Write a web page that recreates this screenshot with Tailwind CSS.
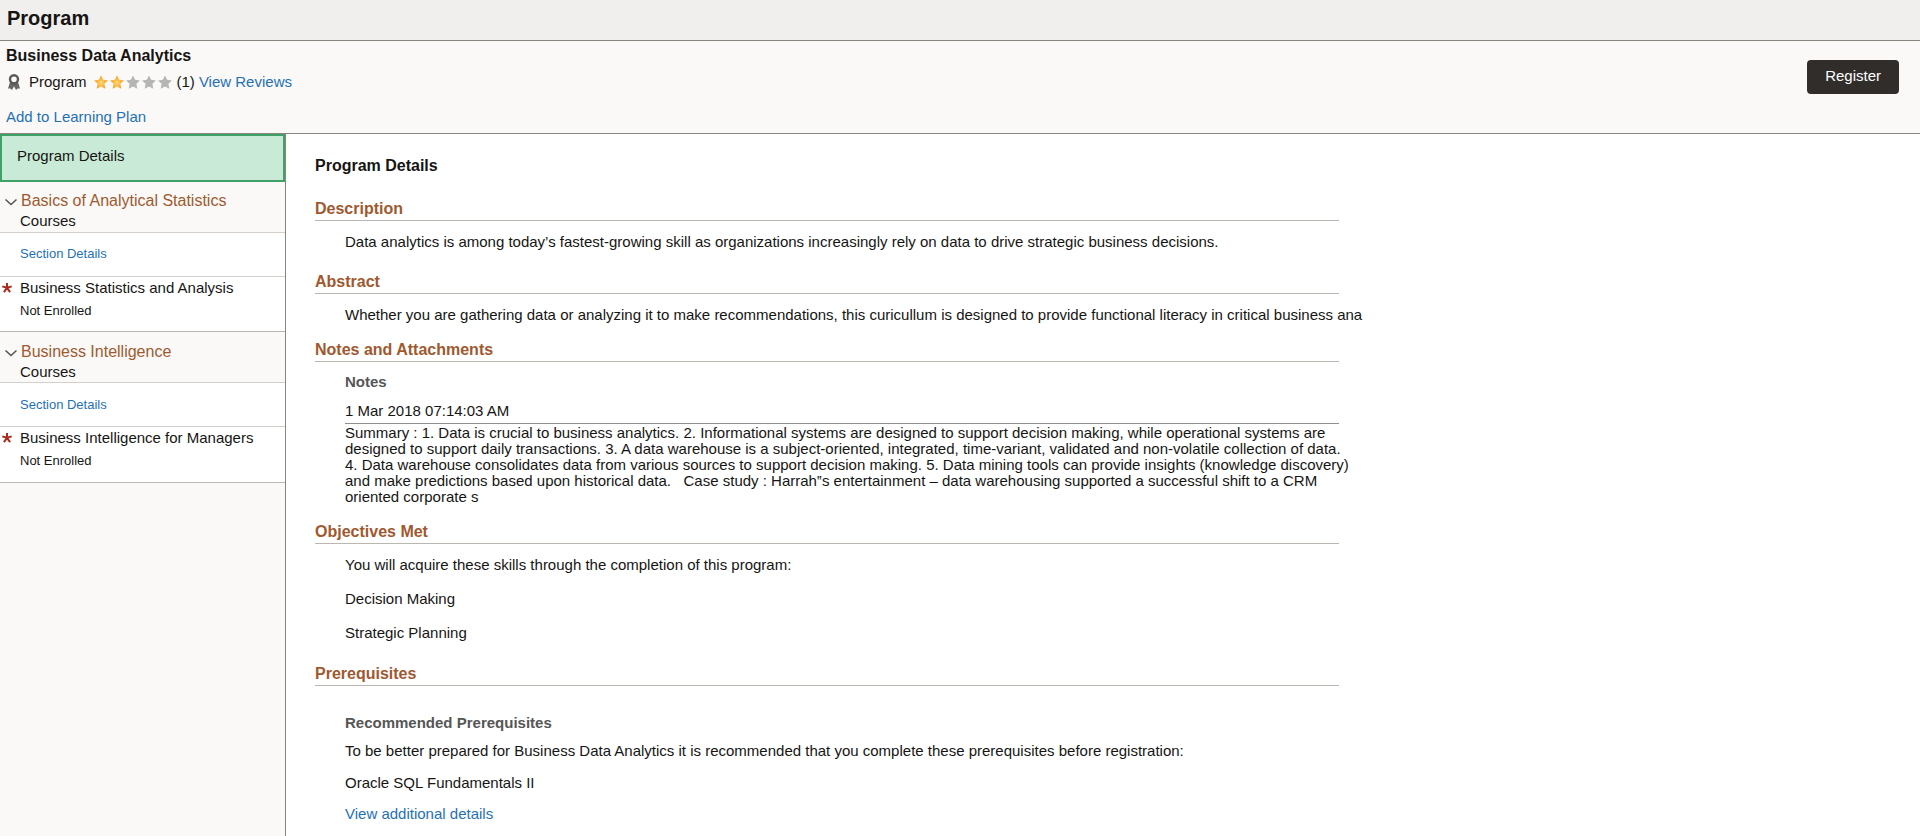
<!DOCTYPE html>
<html lang="en">
<head>
  <meta charset="utf-8">
  <meta name="viewport" content="width=device-width, initial-scale=1">
  <title>Program</title>
  <script src="https://cdn.jsdelivr.net/npm/@tailwindcss/browser@4"></script>
</head>
<body class="flex flex-col h-screen overflow-hidden bg-white font-['Liberation_Sans',Arial,sans-serif] text-[15px] leading-4 text-[#161513]">

  <!-- shared icons -->
  <svg class="absolute size-0" aria-hidden="true">
    <defs>
      <radialGradient id="gold" cx="0.5" cy="0.55" r="0.5">
        <stop offset="0" stop-color="#ffdc80" />
        <stop offset="0.5" stop-color="#fdb943" />
        <stop offset="1" stop-color="#f59a22" />
      </radialGradient>
      <symbol id="star" viewBox="0 0 14 14">
        <path d="M7 0.500l2.100 4.300 4.800.700-3.500 3.300.900 4.900L7 11.500l-4.300 2.200.900-4.900L.1 5.500l4.800-.7z" />
      </symbol>
      <symbol id="required" viewBox="0 0 10 10">
        <path d="M5 4.800V0M5 4.800L.3 3.400M5 4.800l4.700-1.400M5 4.800L1.900 9.200M5 4.800l3.100 4.400" stroke="#aa2a1e" stroke-width="2" />
      </symbol>
    </defs>
  </svg>

  <header class="h-[41px] shrink-0 border-b border-[#8b8580] bg-[#f1efed] px-[7px] pt-1.5">
    <h1 class="text-xl leading-6 font-bold">Program</h1>
  </header>

  <div class="flex h-[93px] shrink-0 items-start justify-between border-b border-[#8b8580] bg-[#fbf9f8] pl-1.5 pr-[21px]">
    <div class="flex flex-col items-start">
      <h2 class="mt-[5px] text-base leading-5 font-bold">Business Data Analytics</h2>
      <div class="mt-2 flex items-center">
        <svg class="ml-0.5 h-4 w-3" viewBox="0 0 12 16" fill="none">
          <path d="M2.200 7.500L0 14.600l2.300-.2L4 16l2-3.800L8 16l1.700-1.600 2.300.2-2.200-7.100z" fill="#686562" />
          <circle cx="6" cy="5.200" r="4" stroke="#5a5855" stroke-width="2.400" fill="#fbf9f8" />
        </svg>
        <span class="ml-[9px]">Program</span>
        <span class="ml-[7px] flex gap-0.5" role="img" aria-label="2 out of 5 stars">
          <svg class="size-3.5" fill="url(#gold)"><use href="#star" /></svg>
          <svg class="size-3.5" fill="url(#gold)"><use href="#star" /></svg>
          <svg class="size-3.5" fill="#b5b5b5"><use href="#star" /></svg>
          <svg class="size-3.5" fill="#b5b5b5"><use href="#star" /></svg>
          <svg class="size-3.5" fill="#b5b5b5"><use href="#star" /></svg>
        </span>
        <span class="ml-[5px]">(1)</span>
        <a href="#" class="ml-1 text-[#1f71b5]">View Reviews</a>
      </div>
      <a href="#" class="mt-[19px] text-[#1f71b5]">Add to Learning Plan</a>
    </div>
    <button type="button" class="mt-[19px] h-[34px] rounded bg-[#312d2a] px-[18px] pb-0.5 text-white">Register</button>
  </div>

  <div class="flex min-h-0 flex-1">

    <nav class="w-[286px] shrink-0 border-r border-[#8b8580] bg-[#fbf9f8]">
      <a href="#" class="block h-12 border-2 border-[#3fa168] bg-[#c9ead7] px-[15px] pt-3">Program Details</a>

      <section>
        <div class="flex h-[51px] border-b border-[#d4cfca] pt-[9px] pl-1">
          <button type="button" aria-label="Collapse section" class="mt-1 size-4 shrink-0">
            <svg class="size-4" viewBox="0 0 16 16" fill="none" stroke="#55524f" stroke-width="1.5"><path d="M1.500 4.500l5.500 5L12.500 4.500" /></svg>
          </button>
          <div>
            <h3 class="pl-px text-base leading-5 text-[#a0592f]">Basics of Analytical Statistics</h3>
            <p class="mt-0.5">Courses</p>
          </div>
        </div>
        <div class="h-11 border-b border-[#d4cfca] bg-white pt-[13px] pl-5 text-[13px]"><a href="#" class="text-[#1f71b5]">Section Details</a></div>
        <div class="flex h-[55px] border-b border-[#bcb6b1] bg-white pt-[3px] pl-0.5">
          <svg class="mt-[3px] mr-2 size-2.5" role="img" aria-label="Required"><use href="#required" /></svg>
          <div>
            <p>Business Statistics and Analysis</p>
            <p class="mt-[7px] text-[13px]">Not Enrolled</p>
          </div>
        </div>
      </section>

      <section>
        <div class="flex h-[51px] border-b border-[#d4cfca] pt-2.5 pl-1">
          <button type="button" aria-label="Collapse section" class="mt-1 size-4 shrink-0">
            <svg class="size-4" viewBox="0 0 16 16" fill="none" stroke="#55524f" stroke-width="1.5"><path d="M1.500 4.500l5.500 5L12.500 4.500" /></svg>
          </button>
          <div>
            <h3 class="pl-px text-base leading-5 text-[#a0592f]">Business Intelligence</h3>
            <p class="mt-0.5">Courses</p>
          </div>
        </div>
        <div class="h-11 border-b border-[#d4cfca] bg-white pt-3.5 pl-5 text-[13px]"><a href="#" class="text-[#1f71b5]">Section Details</a></div>
        <div class="flex h-14 border-b border-[#bcb6b1] bg-white pt-[3px] pl-0.5">
          <svg class="mt-[3px] mr-2 size-2.5" role="img" aria-label="Required"><use href="#required" /></svg>
          <div>
            <p>Business Intelligence for Managers</p>
            <p class="mt-[7px] text-[13px]">Not Enrolled</p>
          </div>
        </div>
      </section>
    </nav>

    <main class="min-w-0 flex-1 overflow-hidden px-[29px]">
      <div class="max-w-5xl">
        <h2 class="mt-[22px] text-base leading-5 font-bold">Program Details</h2>

        <h3 class="mt-[23px] border-b border-[#bcb6b1] pb-px text-base leading-5 font-bold text-[#a0592f]">Description</h3>
        <p class="mt-[13px] ml-[30px]">Data analytics is among today’s fastest-growing skill as organizations increasingly rely on data to drive strategic business decisions.</p>

        <h3 class="mt-[22px] border-b border-[#bcb6b1] pb-px text-base leading-5 font-bold text-[#a0592f]">Abstract</h3>
        <p class="mt-[13px] ml-[30px] whitespace-nowrap">Whether you are gathering data or analyzing it to make recommendations, this curicullum is designed to provide functional literacy in critical business ana</p>

        <h3 class="mt-[17px] border-b border-[#bcb6b1] pb-px text-base leading-5 font-bold text-[#a0592f]">Notes and Attachments</h3>
        <div class="ml-[30px]">
          <h4 class="mt-3 font-bold text-[#565656]">Notes</h4>
          <p class="mt-[13px]">1 Mar 2018 07:14:03 AM</p>
          <hr class="mt-1 border-[#8f8f8f]">
          <p class="mt-px whitespace-nowrap">
            Summary : 1. Data is crucial to business analytics. 2. Informational systems are designed to support decision making, while operational systems are<br>
            designed to support daily transactions. 3. A data warehouse is a subject-oriented, integrated, time-variant, validated and non-volatile collection of data.<br>
            4. Data warehouse consolidates data from various sources to support decision making. 5. Data mining tools can provide insights (knowledge discovery)<br>
            and make predictions based upon historical data. &nbsp; Case study : Harrah‟s entertainment – data warehousing supported a successful shift to a CRM<br>
            oriented corporate s
          </p>
        </div>

        <h3 class="mt-[17px] border-b border-[#bcb6b1] pb-px text-base leading-5 font-bold text-[#a0592f]">Objectives Met</h3>
        <div class="ml-[30px]">
          <p class="mt-[13px]">You will acquire these skills through the completion of this program:</p>
          <p class="mt-[18px]">Decision Making</p>
          <p class="mt-[18px]">Strategic Planning</p>
        </div>

        <h3 class="mt-[23px] border-b border-[#bcb6b1] pb-px text-base leading-5 font-bold text-[#a0592f]">Prerequisites</h3>
        <div class="ml-[30px]">
          <h4 class="mt-[29px] font-bold text-[#565656]">Recommended Prerequisites</h4>
          <p class="mt-3">To be better prepared for Business Data Analytics it is recommended that you complete these prerequisites before registration:</p>
          <p class="mt-4">Oracle SQL Fundamentals II</p>
          <a href="#" class="mt-[15px] inline-block text-[#1f71b5]">View additional details</a>
        </div>
      </div>
    </main>
  </div>

</body>
</html>
